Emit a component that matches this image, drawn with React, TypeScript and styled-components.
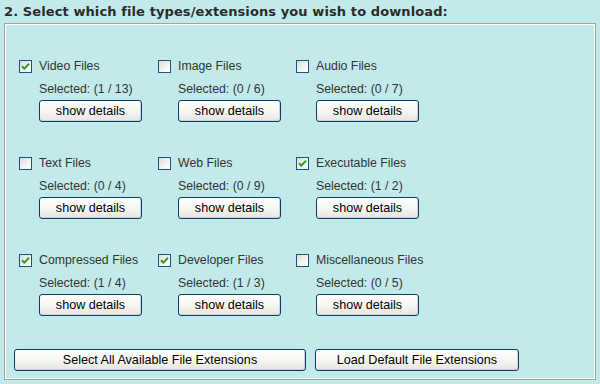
import React from 'react';
import styled, { createGlobalStyle } from 'styled-components';

const GlobalStyle = createGlobalStyle`
  html, body {
    margin: 0;
    padding: 0;
    background: #c3eaea;
  }
  body {
    font-family: "Liberation Sans", Arial, sans-serif;
    font-size: 12.3px;
    color: #333;
  }
`;

const Page = styled.div`
  width: 600px;
  height: 384px;
  overflow: hidden;
  background: #c3eaea;
`;

const Heading = styled.h2`
  margin: 0;
  padding: 4px 0 0 4px;
  height: 19px;
  font-family: "DejaVu Sans", Verdana, sans-serif;
  font-size: 13px;
  font-weight: bold;
  line-height: 16px;
  color: #2b2b2b;
  letter-spacing: 0.1px;
`;

const Box = styled.div`
  margin: 0 4px;
  height: 357px;
  box-sizing: border-box;
  border: 1px solid #a3a39a;
  box-shadow: inset 1px 1px 0 #fff, inset -1px -1px 0 #fff;
  padding: 34px 0 0 0;
`;

const Grid = styled.div`
  display: grid;
  grid-template-columns: 139px 138px 138px;
  row-gap: 33px;
  padding-left: 14px;
`;

const Cell = styled.div`
  display: flex;
  flex-direction: column;
  align-items: flex-start;
`;

const CheckRow = styled.label`
  display: flex;
  align-items: center;
  gap: 7px;
  height: 16px;
  line-height: 16px;
`;

const Box13 = styled.span`
  width: 13px;
  height: 13px;
  box-sizing: border-box;
  border: 1px solid #1c5180;
  background: linear-gradient(135deg, #dcdcd6 0%, #f5f5f2 60%, #ffffff 100%);
  display: flex;
  align-items: center;
  justify-content: center;
`;

const Count = styled.div`
  margin: 8px 0 0 20px;
  line-height: 14px;
  height: 14px;
`;

const Button = styled.button<{ $width: number }>`
  width: ${p => p.$width}px;
  height: 22px;
  box-sizing: border-box;
  border: 1px solid #073d6f;
  border-radius: 3px;
  background: linear-gradient(#ffffff 0%, #f6f6f2 50%, #e6e5df 100%);
  box-shadow: inset -1px -1px 0 #d6d3c8;
  font-family: "Liberation Sans", Arial, sans-serif;
  font-size: 12.6px;
  color: #000;
  padding: 0;
  cursor: pointer;
`;

const DetailButton = styled(Button)`
  margin: 4px 0 0 20px;
`;

const Actions = styled.div`
  display: flex;
  gap: 9px;
  margin-top: 33px;
  padding-left: 9px;
`;

const Check: React.FC<{ on: boolean }> = ({ on }) => (
  <Box13>
    {on && (
      <svg width="9" height="9" viewBox="0 0 9 9">
        <path d="M1 4.2 L3.3 6.6 L8 1.8" fill="none" stroke="#21a121" strokeWidth="2" />
      </svg>
    )}
  </Box13>
);

type FileType = { name: string; selected: number; total: number; on: boolean };

const TYPES: FileType[] = [
  { name: 'Video Files', selected: 1, total: 13, on: true },
  { name: 'Image Files', selected: 0, total: 6, on: false },
  { name: 'Audio Files', selected: 0, total: 7, on: false },
  { name: 'Text Files', selected: 0, total: 4, on: false },
  { name: 'Web Files', selected: 0, total: 9, on: false },
  { name: 'Executable Files', selected: 1, total: 2, on: true },
  { name: 'Compressed Files', selected: 1, total: 4, on: true },
  { name: 'Developer Files', selected: 1, total: 3, on: true },
  { name: 'Miscellaneous Files', selected: 0, total: 5, on: false },
];

const App: React.FC = () => (
  <Page>
    <GlobalStyle />
    <Heading>2. Select which file types/extensions you wish to download:</Heading>
    <Box>
      <Grid>
        {TYPES.map(t => (
          <Cell key={t.name}>
            <CheckRow>
              <Check on={t.on} />
              {t.name}
            </CheckRow>
            <Count>{`Selected: (${t.selected} / ${t.total})`}</Count>
            <DetailButton $width={103}>show details</DetailButton>
          </Cell>
        ))}
      </Grid>
      <Actions>
        <Button $width={292}>Select All Available File Extensions</Button>
        <Button $width={204}>Load Default File Extensions</Button>
      </Actions>
    </Box>
  </Page>
);

export default App;
